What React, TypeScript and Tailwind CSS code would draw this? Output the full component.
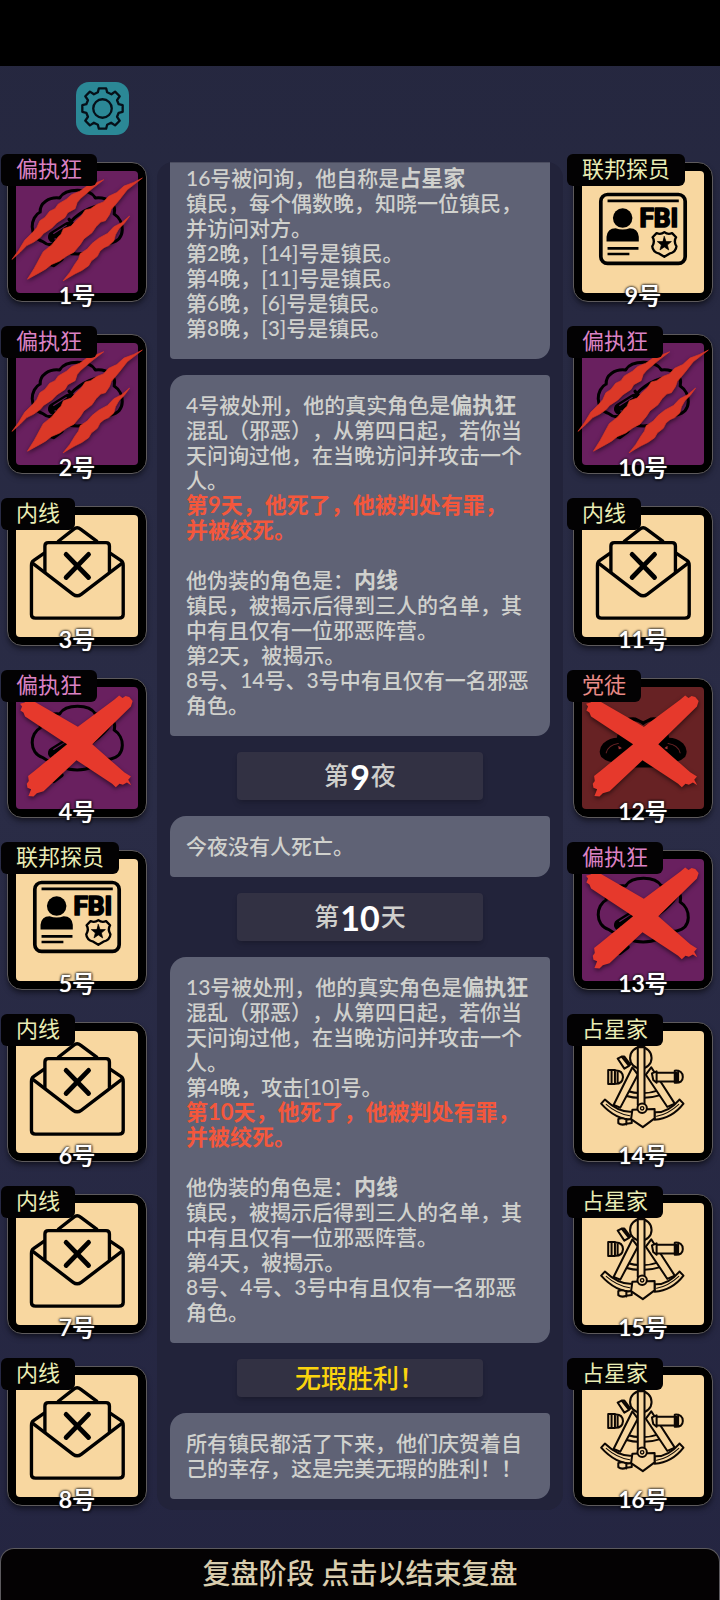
import React from "react";

type Role = "paranoiac" | "insider" | "fbi" | "cultist" | "astrologer";
type Mark = "slashed" | "crossed";
type Seat = { no: number; role: Role; mark?: Mark };

const ROLES: Record<Role, { name: string; tile: string; label: string }> = {
  paranoiac: { name: "偏执狂", tile: "bg-[#69205f]", label: "text-[#db82c4]" },
  insider: { name: "内线", tile: "bg-[#f8d7a0]", label: "text-[#e9ecb4]" },
  fbi: { name: "联邦探员", tile: "bg-[#f8d7a0]", label: "text-[#e9ecb4]" },
  cultist: { name: "党徒", tile: "bg-[#672224]", label: "text-[#e88a86]" },
  astrologer: { name: "占星家", tile: "bg-[#f8d7a0]", label: "text-[#e9ecb4]" },
};

const LEFT: Seat[] = [
  { no: 1, role: "paranoiac", mark: "slashed" },
  { no: 2, role: "paranoiac", mark: "slashed" },
  { no: 3, role: "insider" },
  { no: 4, role: "paranoiac", mark: "crossed" },
  { no: 5, role: "fbi" },
  { no: 6, role: "insider" },
  { no: 7, role: "insider" },
  { no: 8, role: "insider" },
];

const RIGHT: Seat[] = [
  { no: 9, role: "fbi" },
  { no: 10, role: "paranoiac", mark: "slashed" },
  { no: 11, role: "insider" },
  { no: 12, role: "cultist", mark: "crossed" },
  { no: 13, role: "paranoiac", mark: "crossed" },
  { no: 14, role: "astrologer" },
  { no: 15, role: "astrologer" },
  { no: 16, role: "astrologer" },
];

function Knife() {
  return (
    <g fill="none" stroke="#000" strokeWidth="9" strokeLinecap="round" strokeLinejoin="round">
      <path d="M72 122 C70 96 98 76 130 80 C148 50 218 50 236 80 C272 76 300 98 292 128 C324 148 328 204 282 214 C262 218 258 208 250 214 C238 258 126 258 114 214 C104 222 92 220 80 210 C36 196 42 136 72 122" />
      <path d="M84 286 L100 276 L112 280 L136 262" strokeWidth="12" />
      <path d="M164 150 C190 120 240 96 288 98 C272 136 226 170 186 186 Z" />
      <path d="M158 144 L176 170" strokeWidth="10" />
      <path d="M112 196 L156 168" strokeWidth="34" />
      <path d="M112 186 L150 162" stroke="#69205f" strokeWidth="3" />
      <path d="M116 202 h2 M136 190 h2 M154 178 h2" stroke="#69205f" strokeWidth="4" />
    </g>
  );
}

function Envelope() {
  return (
    <g fill="none" stroke="#000" strokeWidth="10" strokeLinecap="round" strokeLinejoin="round">
      <path d="M126 78 L172 42 Q182 34 192 42 L240 78" />
      <path d="M86 168 V92 Q86 82 96 82 H268 Q278 82 278 92 V168" />
      <path d="M83 114 L52 136 Q46 140 46 150 V296 Q46 307 58 307 H306 Q319 307 319 296 V150 Q319 140 313 136 L281 114" />
      <path d="M50 144 L170 236 Q182 245 194 236 L315 144" />
      <path d="M149 117 L216 186 M216 117 L149 186" strokeWidth="14" />
    </g>
  );
}

function Badge() {
  return (
    <g fill="none" stroke="#000" strokeLinecap="round" strokeLinejoin="round">
      <rect x="56" y="70" width="251" height="205" rx="20" strokeWidth="11" />
      <path d="M76 89 H288" strokeWidth="8" strokeLinecap="butt" />
      <circle cx="121" cy="140" r="29" fill="#000" stroke="none" />
      <path d="M73 210 V196 Q75 170 100 170 Q121 178 142 170 Q167 170 169 196 V210 Z" fill="#000" stroke="none" />
      <path d="M76 230 H168 M76 247 H141" strokeWidth="8" strokeLinecap="butt" />
      <text
        x="171"
        y="166"
        fontSize="78"
        fontWeight="700"
        fontFamily="'Liberation Sans Narrow', Roboto, sans-serif"
        fill="#000"
        strokeWidth="5"
      >
        FBI
      </text>
      <path
        d="M245 182 Q255 190 268 185 L280 197 Q272 210 281 224 Q280 241 260 246 L245 255 L230 246 Q210 241 209 224 Q218 210 210 197 L222 185 Q235 190 245 182 Z"
        strokeWidth="7"
      />
      <path d="M245 195 L250 210 L266 210 L254 220 L258 235 L245 226 L232 235 L236 220 L224 210 L240 210 Z" fill="#000" stroke="#000" strokeWidth="2" />
    </g>
  );
}

function Cultist() {
  return (
    <g stroke="#000" strokeWidth="7" strokeLinecap="round" strokeLinejoin="round">
      <path d="M118 108 Q130 92 158 94 L182 106 L206 94 Q234 92 246 108 L262 180 V236 H100 V180 Z" />
      <path d="M130 106 Q160 98 182 116 Q206 98 232 106" fill="none" stroke="#672224" strokeWidth="4" />
      <path d="M120 156 Q90 150 66 170 Q50 188 60 206 Q80 226 130 222 Z" />
      <path d="M244 156 Q274 150 298 170 Q314 188 304 206 Q284 226 234 222 Z" />
      <path d="M72 196 Q78 172 108 168 M292 196 Q286 172 256 168" fill="none" stroke="#672224" strokeWidth="3" />
      <path d="M106 172 L122 182 L108 188 Z M256 172 L242 182 L256 188 Z" fill="#9a3436" strokeWidth="3" />
    </g>
  );
}

function Sextant() {
  return (
    <g fill="#f8d7a0" stroke="#0d0703" strokeWidth="6" strokeLinecap="round" strokeLinejoin="round">
      <path d="M132 178 Q180 194 230 176 L236 190 Q180 208 126 192 Z" />
      <path d="M150 108 L94 220 L114 228 L166 130 Z" />
      <path d="M206 108 L276 216 L254 226 L190 130 Z" />
      <path d="M68 204 Q110 244 150 240 V264 Q100 264 57 216 Z" />
      <path d="M290 204 Q256 244 216 242 V264 Q268 260 302 216 Z" />
      <path d="M72 218 Q104 246 142 252 M288 218 Q258 246 222 254" fill="none" strokeWidth="3" />
      <path d="M106 82 L118 76 L140 104 L126 112 Z M118 76 L126 76 L144 100" />
      <path d="M78 116 H98 V158 H78 Z M98 118 Q120 116 122 137 Q120 158 98 157 Z M88 116 V158 M106 120 V154" />
      <path d="M208 126 L222 120 V154 L212 146 Z M222 124 H280 V150 H222 Z M276 118 Q300 116 300 137 Q300 156 276 154 Z M286 118 V154" />
      <circle cx="175" cy="80" r="32" />
      <path d="M166 48 H186 V220 H166 Z" />
      <path d="M108 262 Q120 256 132 264 L148 262 V274 L132 276 Q118 282 108 274 Z M132 262 V278" />
      <path d="M150 234 L216 232 V260 L181 286 L146 262 Z" />
      <circle cx="179" cy="230" r="14" />
      <circle cx="179" cy="230" r="5" strokeWidth="4" />
    </g>
  );
}

function Slashes() {
  return (
    <g fill="#db3827" stroke="#db3827" strokeWidth="2" strokeLinejoin="round">
      <path d="M261 26 L236 36 L211 45 L190 60 L166 70 L150 84 L126 98 L116 112 L100 120 L86 138 L71 148 L62 168 L50 182 L26 206 L8 236 L-12 263 L12 242 L32 222 L52 212 L72 198 L82 186 L106 170 L122 154 L146 138 L154 124 L176 112 L182 94 L192 82 L226 53 Z" />
      <path d="M376 21 L350 34 L321 45 L300 64 L276 75 L260 92 L240 100 L222 112 L206 116 L194 134 L180 146 L164 164 L141 172 L134 188 L126 196 L106 220 L81 240 L66 268 L54 290 L34 322 L71 302 L88 292 L106 278 L130 268 L152 252 L172 242 L192 218 L202 202 L226 184 L238 166 L252 152 L266 148 L278 130 L284 114 L306 88 L331 56 Z" />
      <path d="M338 134 L314 154 L291 166 L272 186 L246 200 L226 216 L212 232 L191 246 L186 262 L176 276 L160 302 L140 327 L158 316 L176 306 L196 296 L216 282 L224 268 L242 254 L250 238 L262 228 L276 222 L291 208 L296 190 L306 172 L322 156 Z" />
    </g>
  );
}

function Cross() {
  return (
    <path
      fill="#e6392c"
      d="M40 35 L184 118 L292 38 L307 25 L317 33 L326 27 L337 30 L347 42 L342 58 L227 170 L322 254 L342 266 L334 276 L343 292 L330 284 L318 291 L308 288 L297 298 L286 288 L180 218 L82 310 L62 316 L52 326 L37 324 L45 304 L34 300 L32 288 L38 280 L36 265 L52 252 L152 170 L27 88 L22 76 L13 70 L18 58 L12 50 L26 46 L28 38 Z"
    />
  );
}

const ART: Record<Role, () => React.JSX.Element> = {
  paranoiac: Knife,
  insider: Envelope,
  fbi: Badge,
  cultist: Cultist,
  astrologer: Sextant,
};

function SeatCard({ seat }: { seat: Seat }) {
  const role = ROLES[seat.role];
  const Art = ART[seat.role];
  return (
    <li className="relative aspect-square w-[140px] rounded-[15px] border border-[#5d5a5c] bg-black p-2 shadow-md shadow-black/40">
      <div className={`h-full rounded-[4px] ${role.tile}`}>
        <svg viewBox="0 0 363 363" className="block h-full w-full overflow-visible" aria-hidden="true">
          <Art />
          {seat.mark && (
            <g className="drop-shadow-[0_6px_6px_rgba(0,0,0,0.55)]">
              {seat.mark === "slashed" ? <Slashes /> : <Cross />}
            </g>
          )}
        </svg>
      </div>
      <span
        className={`absolute -left-[7px] -top-[9px] h-8 rounded-[6px] bg-[#030203] px-[15px] text-[22px] leading-[30px] whitespace-nowrap ${role.label}`}
      >
        {role.name}
      </span>
      <span className="absolute inset-x-0 -bottom-[10px] text-center text-[23px] leading-8 font-medium text-white [text-shadow:0_0_1px_#fff,0_0_2px_#000,0_0_3px_#000,0_1px_3px_#000]">
        {seat.no}号
      </span>
    </li>
  );
}

function SeatColumn({ seats }: { seats: Seat[] }) {
  return (
    <ul className="flex shrink-0 flex-col gap-8">
      {seats.map((s) => (
        <SeatCard key={s.no} seat={s} />
      ))}
    </ul>
  );
}

function Message({ children, clipped = false }: { children: React.ReactNode; clipped?: boolean }) {
  return (
    <article
      className={`bg-[#5f6275] px-4 pb-[19px] text-[21px] leading-[25px] font-medium text-[#d0d1cd] ${
        clipped
          ? "rounded-br-[14px] rounded-bl-[4px] border-t border-[#4b4d60] pt-[2px]"
          : "rounded-tl-[16px] rounded-tr-[4px] rounded-br-[14px] rounded-bl-[4px] pt-[17px]"
      }`}
    >
      {children}
    </article>
  );
}

function Strong({ children }: { children: React.ReactNode }) {
  return <strong className="text-[22px] leading-none font-bold">{children}</strong>;
}

function Verdict({ children }: { children: React.ReactNode }) {
  return <p className="text-[22px] font-bold text-[#f4573c]">{children}</p>;
}

function Divider({ children }: { children: React.ReactNode }) {
  return (
    <h2 className="mx-auto flex h-12 w-[246px] items-center justify-center rounded-[4px] bg-[#323143] text-[25px] font-medium text-[#cfcfcc] shadow-md shadow-black/15">
      {children}
    </h2>
  );
}

function Count({ children }: { children: React.ReactNode }) {
  return <b className="px-px text-[34px] font-bold text-white">{children}</b>;
}

export default function App() {
  return (
    <div className="flex min-h-screen flex-col bg-linear-to-b from-[#25273f] via-[#2a2c46] to-[#242541] font-['Lato','Noto_Sans_CJK_SC',sans-serif] [text-spacing-trim:space-all]" lang="zh-CN">
      <div className="h-[66px] bg-black" />
      <header className="flex h-24 items-start px-[76px] pt-4">
        <button aria-label="设置" className="flex size-[53px] items-center justify-center rounded-[13px] bg-[#2b8896]">
          <svg viewBox="0 0 130 130" className="size-[43px]" fill="none" stroke="#061019" strokeWidth="7" strokeLinejoin="round" aria-hidden="true">
            <circle cx="65" cy="65" r="28" />
            <path d="M54 4 H76 L79 16 L92 22 L103 14 L117 28 L109 40 L114 52 L126 55 V75 L114 78 L109 90 L117 102 L103 116 L91 108 L79 114 L76 126 H54 L51 114 L39 108 L27 116 L13 102 L21 90 L16 78 L4 75 V55 L16 52 L21 40 L13 28 L27 14 L39 22 L51 16 Z" />
          </svg>
        </button>
      </header>

      <main className="flex items-start gap-[10px] px-[7px]">
        <SeatColumn seats={LEFT} />

        <section className="flex min-w-0 flex-1 flex-col gap-4 rounded-[16px] bg-[#22233a] px-[13px] pb-[11px]">
          <Message clipped>
            <p>
              16号被问询，他自称是<Strong>占星家</Strong>
            </p>
            <p>镇民，每个偶数晚，知晓一位镇民，并访问对方。</p>
            <p>第2晚，[14]号是镇民。</p>
            <p>第4晚，[11]号是镇民。</p>
            <p>第6晚，[6]号是镇民。</p>
            <p>第8晚，[3]号是镇民。</p>
          </Message>

          <Message>
            <p>
              4号被处刑，他的真实角色是<Strong>偏执狂</Strong>
            </p>
            <p>混乱（邪恶），从第四日起，若你当天问询过他，在当晚访问并攻击一个人。</p>
            <Verdict>
              第9天，他死了，他被判处有罪，
              <br />
              并被绞死。
            </Verdict>
            <br />
            <p>
              他伪装的角色是：<Strong>内线</Strong>
            </p>
            <p>镇民，被揭示后得到三人的名单，其中有且仅有一位邪恶阵营。</p>
            <p>第2天，被揭示。</p>
            <p>8号、14号、3号中有且仅有一名邪恶角色。</p>
          </Message>

          <Divider>
            第<Count>9</Count>夜
          </Divider>

          <Message>
            <p>今夜没有人死亡。</p>
          </Message>

          <Divider>
            第<Count>10</Count>天
          </Divider>

          <Message>
            <p>
              13号被处刑，他的真实角色是<Strong>偏执狂</Strong>
            </p>
            <p>混乱（邪恶），从第四日起，若你当天问询过他，在当晚访问并攻击一个人。</p>
            <p>第4晚，攻击[10]号。</p>
            <Verdict>
              第10天，他死了，他被判处有罪，
              <br />
              并被绞死。
            </Verdict>
            <br />
            <p>
              他伪装的角色是：<Strong>内线</Strong>
            </p>
            <p>镇民，被揭示后得到三人的名单，其中有且仅有一位邪恶阵营。</p>
            <p>第4天，被揭示。</p>
            <p>
              8号、4号、3号中有且仅有一名邪恶
              <br />
              角色。
            </p>
          </Message>

          <h2 className="mx-auto flex h-[38px] w-[246px] items-center justify-center rounded-[4px] bg-[#323143] text-[26px] font-medium text-[#fbd40e] shadow-md shadow-black/15">
            无瑕胜利！
          </h2>

          <Message>
            <p>所有镇民都活了下来，他们庆贺着自己的幸存，这是完美无瑕的胜利！！</p>
          </Message>
        </section>

        <SeatColumn seats={RIGHT} />
      </main>

      <button className="mt-auto h-[52px] w-full rounded-t-[14px] border border-b-0 border-[#5c5a5e] bg-[#040203] pb-1 text-[28px] leading-[46px] font-medium text-[#d9cdae]">
        复盘阶段 点击以结束复盘
      </button>
    </div>
  );
}
